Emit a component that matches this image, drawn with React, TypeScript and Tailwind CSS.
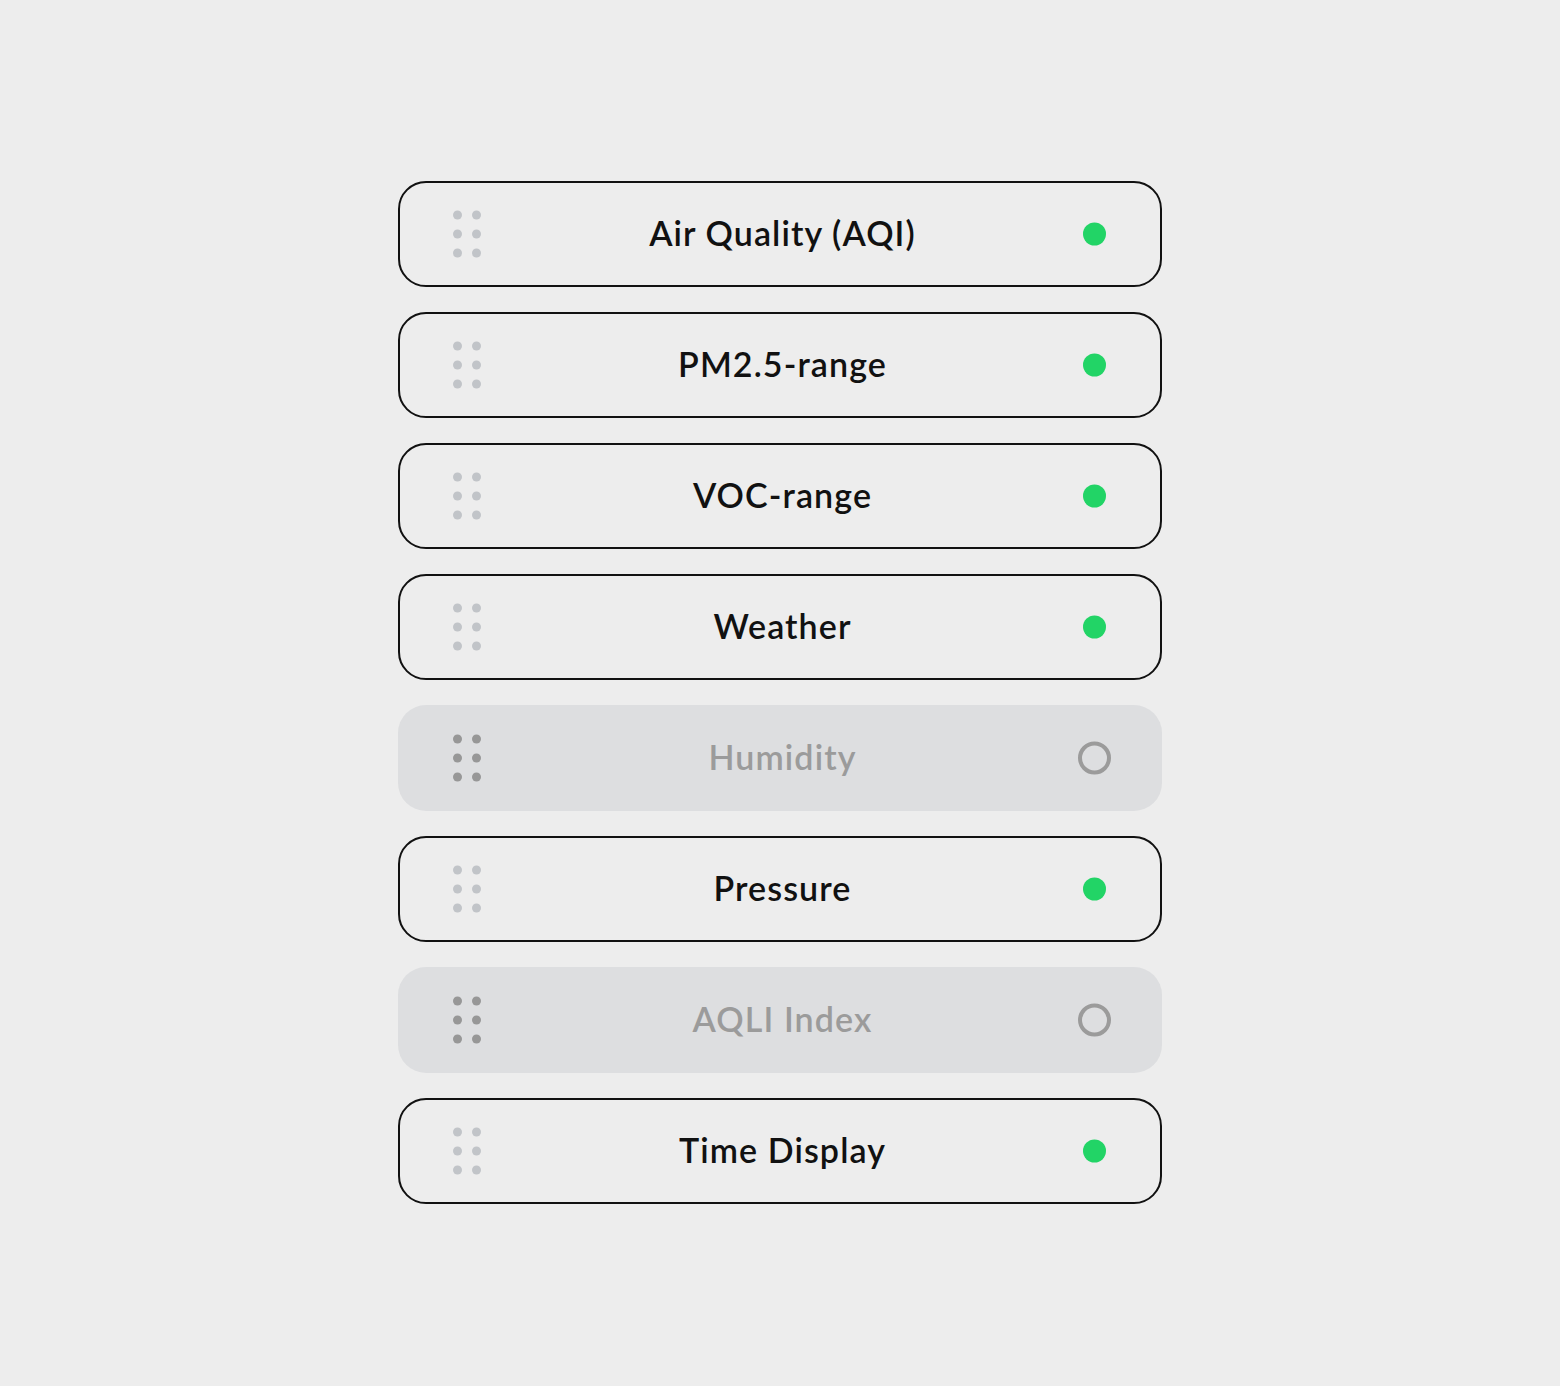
const items = [
  { label: "Air Quality (AQI)", on: true },
  { label: "PM2.5-range", on: true },
  { label: "VOC-range", on: true },
  { label: "Weather", on: true },
  { label: "Humidity", on: false },
  { label: "Pressure", on: true },
  { label: "AQLI Index", on: false },
  { label: "Time Display", on: true },
];

function Grip({ on }: { on: boolean }) {
  const dot = on ? "bg-[#c1c4c8]" : "bg-[#979797]";
  return (
    <div className="grid grid-cols-2 gap-x-[10px] gap-y-[10px]">
      {Array.from({ length: 6 }).map((_, i) => (
        <span key={i} className={`block w-[9px] h-[9px] rounded-full ${dot}`} />
      ))}
    </div>
  );
}

export default function App() {
  return (
    <div className="min-h-[1386px] w-full bg-[#ededed] flex justify-center pt-[181px] font-['Lato',sans-serif]">
      <div className="flex flex-col gap-[25px] w-[764px]">
        {items.map((it) => (
          <div
            key={it.label}
            className={`relative h-[106px] rounded-[28px] flex items-center ${
              it.on ? "border-2 border-[#111111] bg-[#ededed]" : "bg-[#dddee0]"
            }`}
          >
            <div className={`absolute top-1/2 -translate-y-1/2 ${it.on ? "left-[53px]" : "left-[55px]"}`}>
              <Grip on={it.on} />
            </div>
            <span
              className={`flex-1 text-center text-[34px] leading-none pb-[3px] pl-[5px] font-semibold tracking-[1.1px] ${
                it.on ? "text-[#111111]" : "text-[#9b9b9b]"
              }`}
            >
              {it.label}
            </span>
            {it.on ? (
              <span className="absolute right-[54px] top-1/2 -translate-y-1/2 w-[23px] h-[23px] rounded-full bg-[#22d466]" />
            ) : (
              <span className="absolute right-[51px] top-1/2 -translate-y-1/2 w-[33px] h-[33px] rounded-full border-4 border-[#9b9b9b]" />
            )}
          </div>
        ))}
      </div>
    </div>
  );
}
